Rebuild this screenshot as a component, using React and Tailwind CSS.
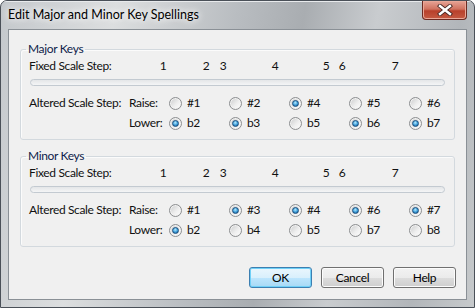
import React from 'react';

const ticks = [
  { n: '1', cls: 'ml-0' },
  { n: '2', cls: 'ml-[35px]' },
  { n: '3', cls: 'ml-[9px]' },
  { n: '4', cls: 'ml-[44px]' },
  { n: '5', cls: 'ml-[43px]' },
  { n: '6', cls: 'ml-[8px]' },
  { n: '7', cls: 'ml-[45px]' },
];

const groups = [
  {
    title: 'Major Keys',
    extra: '',
    raise: [['#1', false], ['#2', false], ['#4', true], ['#5', false], ['#6', false]],
    lower: [['b2', true], ['b3', true], ['b5', false], ['b6', true], ['b7', true]],
  },
  {
    title: 'Minor Keys',
    extra: 'mt-[8px]',
    raise: [['#1', false], ['#3', true], ['#4', true], ['#6', true], ['#7', true]],
    lower: [['b2', true], ['b4', false], ['b5', false], ['b7', false], ['b8', false]],
  },
];

const Radio = ({ checked }) => (
  <span className="flex h-[13px] w-[13px] shrink-0 items-center justify-center rounded-full border border-[#8c8e90] bg-[linear-gradient(135deg,#c9cacb,#eeeeee_55%,#ffffff)] shadow-[inset_0_0_0_1px_#f2f2f2]">
    {checked && (
      <span className="h-[7px] w-[7px] rounded-full border border-[#1b4f7e] bg-[radial-gradient(circle_at_45%_35%,#b5ebff,#3a9ad6_55%,#0f4d86)]" />
    )}
  </span>
);

const RadioRow = ({ label, first, items }) => (
  <div className="flex h-[20px] items-center whitespace-nowrap">
    <span className="w-[100px] shrink-0">{first}</span>
    <span className="w-[40px] shrink-0">{label}</span>
    {items.map(([text, on], i) => (
      <span key={text} className={`flex shrink-0 items-center gap-[5px] ${i < 4 ? 'w-[60px]' : ''}`}>
        <Radio checked={on} />
        <span>{text}</span>
      </span>
    ))}
  </div>
);

const Group = ({ g }) => (
  <fieldset className={`mx-[11px] min-w-0 rounded-[3px] border border-[#d3d9de] px-[8px] pb-[6px] shadow-[inset_1px_1px_0_#fbfbfb] ${g.extra}`}>
    <legend className="ml-[-3px] px-[2px] leading-[16px] text-[#0e1d4a]">{g.title}</legend>
    <div className="flex h-[18px] items-center whitespace-nowrap">
      <span className="w-[130px] shrink-0">Fixed Scale Step:</span>
      {ticks.map((t) => (
        <span key={t.n} className={`w-[8px] shrink-0 text-center ${t.cls}`}>{t.n}</span>
      ))}
    </div>
    <div className="mx-[1px] mt-[4px] h-[7px] rounded-full border border-[#c3cad1] bg-[linear-gradient(#e4e6e8,#f4f5f6)]" />
    <div className="mt-[7px]">
      <RadioRow first="Altered Scale Step:" label="Raise:" items={g.raise} />
      <RadioRow first="" label="Lower:" items={g.lower} />
    </div>
  </fieldset>
);

const Button = ({ children, primary }) => (
  <button
    className={
      primary
        ? 'h-[21px] w-[63px] rounded-[3px] border border-[#3c7fb1] bg-[linear-gradient(#eaf6fd,#d9f0fc_50%,#bee6fd_50%,#a7d9f5)] text-[12px] text-black shadow-[inset_0_0_0_1px_#6fd0f7]'
        : 'h-[21px] w-[63px] rounded-[3px] border border-[#707070] bg-[linear-gradient(#f2f2f2,#ebebeb_50%,#dddddd_50%,#cfcfcf)] text-[12px] text-black shadow-[inset_0_0_0_1px_#fcfcfc]'
    }
  >
    {children}
  </button>
);

export default function App() {
  return (
    <div className="flex h-[308px] w-[475px] flex-col overflow-hidden rounded-t-[7px] border border-[#4a5058] bg-[linear-gradient(100deg,#c4c8cc,#dcdedf_22%,#b9bdc1_45%,#a9adb1_58%,#c9cccf_72%,#b2b6ba_88%,#c7cacc)] font-['Lato','Noto_Sans',sans-serif] text-[12px] text-[#111]">
      {/* title bar */}
      <div className="flex h-[28px] shrink-0 items-start justify-between pl-[7px] pr-[7px] shadow-[inset_0_1px_0_#e8eaec]">
        <span className="mt-[6px] whitespace-nowrap text-[12.5px] leading-[16px] text-black [text-shadow:0_0_6px_#ffffff,0_0_10px_#ffffff]">
          Edit Major and Minor Key Spellings
        </span>
        <div className="flex h-[19px] w-[45px] items-center justify-center rounded-b-[4px] border border-t-0 border-[#6d2a22] bg-[linear-gradient(#e7a496,#d0725f_45%,#b8402b_55%,#c55a42)] shadow-[inset_0_0_0_1px_#e9a898]">
          <svg width="16" height="12" viewBox="0 0 16 12">
            <path d="M3 2 L13 10 M13 2 L3 10" stroke="#4a2a26" strokeWidth="4.2" strokeLinecap="square" />
            <path d="M3 2 L13 10 M13 2 L3 10" stroke="#ffffff" strokeWidth="2.4" strokeLinecap="square" />
          </svg>
        </div>
      </div>
      {/* client area */}
      <div className="mx-[7px] mb-[7px] flex flex-1 flex-col border border-[#8a9096] bg-[#f0f0f0] pt-[11px] tracking-[-0.35px]">
        {groups.map((g) => (
          <Group key={g.title} g={g} />
        ))}
        <div className="mt-[20px] flex justify-end gap-[9px] pr-[10px]">
          <Button primary>OK</Button>
          <Button>Cancel</Button>
          <Button>Help</Button>
        </div>
      </div>
    </div>
  );
}
